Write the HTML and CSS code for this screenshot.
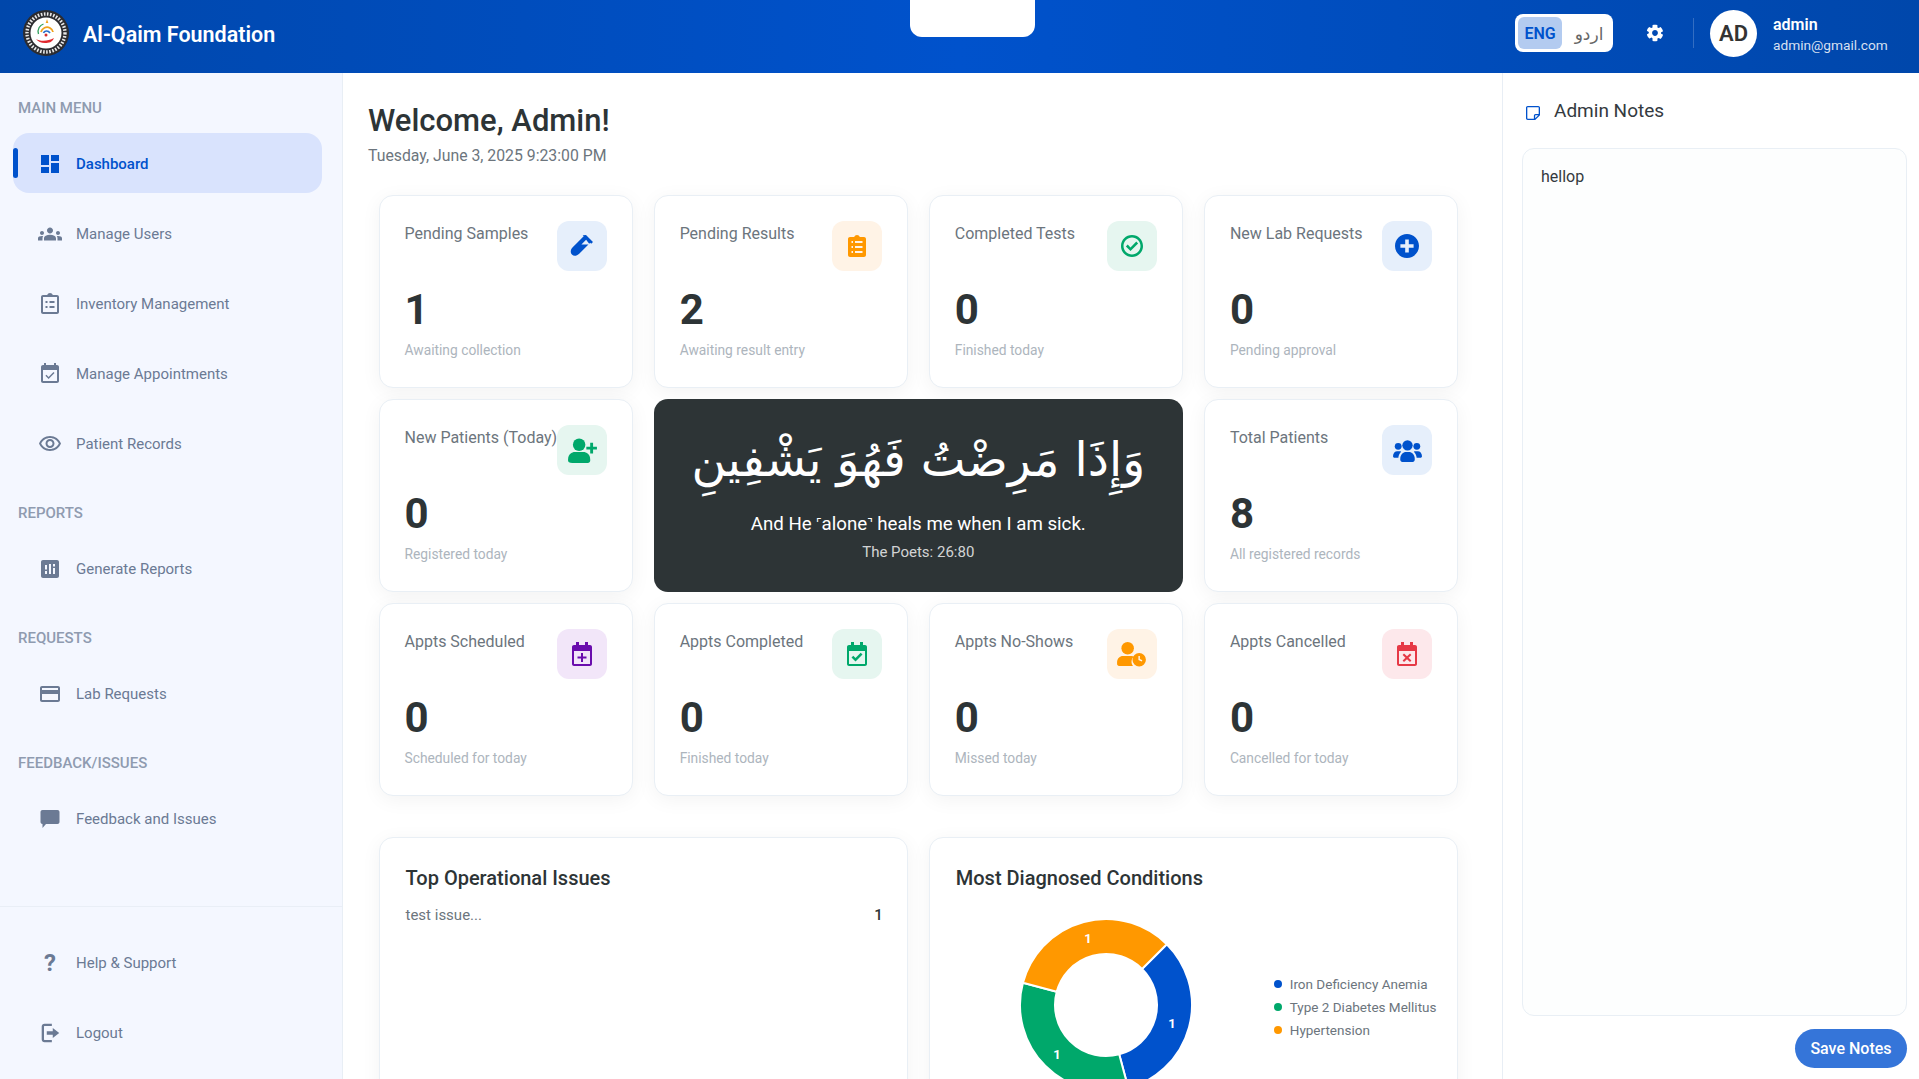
FILE: index.html
```html
<!DOCTYPE html>
<html lang="en">
<head>
    <meta charset="UTF-8">
    <meta name="viewport" content="width=device-width, initial-scale=1.0">
    <title>Al-Qaim Foundation</title>
    <link rel="stylesheet" href="styles.css">
</head>
<body>
    <svg class="sprite" xmlns="http://www.w3.org/2000/svg">
        <symbol id="i-dashboard" viewBox="0 0 24 24"><path d="M3 13h8V3H3v10zm0 8h8v-6H3v6zm10 0h8V11h-8v10zm0-18v6h8V3h-8z"/></symbol>
        <symbol id="i-groups" viewBox="0 0 24 24"><path d="M12 12.750c1.630 0 3.070.39 4.240.9 1.080.48 1.760 1.560 1.760 2.730V18.500H6v-2.110c0-1.180.68-2.260 1.760-2.730 1.170-.52 2.610-.91 4.240-.91zM4 13c1.100 0 2-.9 2-2s-.9-2-2-2-2 .9-2 2 .9 2 2 2zm1.130 1.100c-.37-.06-.74-.1-1.130-.1-.99 0-1.930.21-2.780.58C.48 14.900 0 15.620 0 16.430v2.070h4.500v-2.110c0-.83.23-1.610.63-2.290zM20 13c1.100 0 2-.9 2-2s-.9-2-2-2-2 .9-2 2 .9 2 2 2zm4 3.430c0-.81-.48-1.530-1.220-1.850-.85-.37-1.790-.58-2.780-.58-.39 0-.76.04-1.130.1.4.68.63 1.460.63 2.290v2.110H24v-2.070zM12 5.500c1.660 0 3 1.340 3 3s-1.340 3-3 3-3-1.340-3-3 1.340-3 3-3z"/></symbol>
        <symbol id="i-inventory" viewBox="0 0 24 24"><path d="M19 3h-4.200C14.400 1.800 13.300 1 12 1s-2.400.8-2.800 2H5c-1.100 0-2 .9-2 2v15c0 1.100.9 2 2 2h14c1.100 0 2-.9 2-2V5c0-1.100-.9-2-2-2zm0 17H5V5h14v15z"/><path d="M7.500 9h2v2h-2zM11.500 9h5v2h-5zM7.500 14h2v2h-2zM11.500 14h5v2h-5z"/></symbol>
        <symbol id="i-event" viewBox="0 0 24 24"><path d="M16.530 11.060L15.470 10l-4.880 4.880-2.120-2.120-1.060 1.060L10.590 17l5.940-5.940zM19 3h-1V1h-2v2H8V1H6v2H5c-1.110 0-1.990.9-1.990 2L3 19c0 1.100.89 2 2 2h14c1.100 0 2-.9 2-2V5c0-1.100-.9-2-2-2zm0 16H5V8h14v11z"/></symbol>
        <symbol id="i-eye" viewBox="0 0 24 24"><path d="M12 6c3.790 0 7.170 2.130 8.820 5.500C19.170 14.870 15.790 17 12 17s-7.170-2.130-8.820-5.500C4.830 8.130 8.210 6 12 6m0-2C7 4 2.730 7.110 1 11.500 2.730 15.890 7 19 12 19s9.270-3.110 11-7.500C21.270 7.110 17 4 12 4zm0 5c1.380 0 2.500 1.120 2.500 2.500S13.380 14 12 14s-2.500-1.120-2.500-2.500S10.620 9 12 9m0-2c-2.480 0-4.500 2.020-4.500 4.500S9.520 16 12 16s4.500-2.020 4.500-4.500S14.480 7 12 7z"/></symbol>
        <symbol id="i-report" viewBox="0 0 24 24"><path d="M19 3H5c-1.100 0-2 .9-2 2v14c0 1.100.9 2 2 2h14c1.100 0 2-.9 2-2V5c0-1.100-.9-2-2-2zM9 17H7v-3h2v3zm0-4.500H7V8h2v4.500zM13 17h-2V7h2v10zm4 0h-2v-6h2v6zm0-7.500h-2V7h2v2.500z"/></symbol>
        <symbol id="i-card" viewBox="0 0 24 24"><path d="M20 4H4c-1.110 0-1.990.89-1.990 2L2 18c0 1.110.89 2 2 2h16c1.110 0 2-.89 2-2V6c0-1.110-.89-2-2-2zm0 14H4v-6h16v6zm0-10H4V6h16v2z"/></symbol>
        <symbol id="i-chat" viewBox="0 0 24 24"><path d="M4.500 3h15c1.100 0 2 .9 2 2v10c0 1.100-.9 2-2 2H8l-3.500 4v-4c-1.100 0-2-.9-2-2V5c0-1.100.9-2 2-2z"/></symbol>
        <symbol id="i-logout" viewBox="-1 -1 26 26"><path d="M3 5c0-1.700 1.300-3 3-3h8v2.500H6c-.3 0-.5.2-.5.5v14c0 .3.2.5.5.5h8V22H6c-1.700 0-3-1.300-3-3V5z"/><path d="M15 6.500l7 5.500-7 5.500V14H8.500v-4H15V6.500z"/></symbol>
        <symbol id="i-gear" viewBox="0 0 24 24"><path d="M21.300 13.900l-2-1.100c.1-.5.100-1.100 0-1.600l2-1.100c.2-.1.300-.4.300-.6-.5-1.700-1.400-3.200-2.600-4.400-.2-.2-.4-.2-.7-.1l-2 1.100c-.4-.3-.9-.6-1.400-.8V3c0-.3-.2-.5-.4-.5-1.700-.4-3.500-.4-5.100 0-.3 0-.4.300-.4.500v2.300c-.5.200-1 .5-1.400.8l-2-1.100c-.2-.1-.5-.1-.7.1C3.700 5.800 2.800 7.300 2.300 9c-.1.300 0 .5.300.6l2 1.100c-.1.500-.1 1.100 0 1.600l-2 1.100c-.2.100-.3.400-.3.600.5 1.700 1.400 3.200 2.600 4.400.2.200.4.200.7.1l2-1.100c.4.300.9.600 1.400.8V21c0 .3.2.5.4.5 1.700.4 3.500.4 5.100 0 .3 0 .4-.3.4-.5v-2.300c.5-.2 1-.5 1.400-.8l2 1.100c.2.100.5.100.7-.1 1.200-1.200 2.100-2.700 2.600-4.400.1-.3 0-.5-.3-.6zM12 15.500c-1.900 0-3.500-1.600-3.500-3.500s1.600-3.500 3.500-3.500 3.500 1.600 3.500 3.500-1.600 3.500-3.500 3.500z"/></symbol>
        <symbol id="i-note" viewBox="0 0 16 16"><path d="M2 0h12c1.100 0 2 .9 2 2v8.500L10.500 16H2c-1.100 0-2-.9-2-2V2C0 .9.900 0 2 0zm0 1.500c-.3 0-.5.200-.5.500v12c0 .3.200.5.500.5h7V11c0-1.100.9-2 2-2h3.500V2c0-.3-.2-.5-.5-.5H2zM10.500 14l3.500-3.500h-3c-.3 0-.5.2-.5.5v3z"/></symbol>
        <symbol id="i-tube" viewBox="0 0 24 24"><path d="M16 1l7 7-1.800 1.800-1-1-11 11c-2.300 2.300-5.500 2.600-7.300.8-1.800-1.800-1.500-5 .8-7.300l11-11-1-1L16 1zm.1 4.700l-4.700 4.700h7.100l.7-.7-3.100-4z"/></symbol>
        <symbol id="i-clipboard" viewBox="0 0 24 24"><path d="M19 3h-4.200C14.400 1.800 13.300 1 12 1s-2.400.8-2.800 2H5c-1.100 0-2 .9-2 2v16c0 1.100.9 2 2 2h14c1.100 0 2-.9 2-2V5c0-1.100-.9-2-2-2zM8 19H6.500v-2H8v2zm0-5H6.500v-2H8v2zm0-5H6.500V7H8v2zm9.500 10H10v-2h7.500v2zm0-5H10v-2h7.500v2zm0-5H10V7h7.500v2z"/></symbol>
        <symbol id="i-check" viewBox="0 0 24 24"><path d="M12 1C5.900 1 1 5.900 1 12s4.900 11 11 11 11-4.900 11-11S18.100 1 12 1zm0 19.500c-4.700 0-8.500-3.800-8.500-8.500S7.300 3.500 12 3.500s8.500 3.800 8.500 8.500-3.800 8.500-8.500 8.500z"/><path d="M10.500 17l-4.600-4.600 1.800-1.800 2.800 2.800 5.800-5.800 1.800 1.800z"/></symbol>
        <symbol id="i-plus" viewBox="2 2 20 20"><path d="M12 2C6.480 2 2 6.480 2 12s4.480 10 10 10 10-4.480 10-10S17.520 2 12 2zm5.500 11.500h-4v4h-3v-4h-4v-3h4v-4h3v4h4v3z"/></symbol>
        <symbol id="i-person-add" viewBox="0 0 30 26"><circle cx="11.500" cy="7" r="6.500"/><path d="M0 22c0-5 4-7.500 7-7.500h9c3 0 7 2.500 7 7.500v1.500c0 1.400-1.100 2.500-2.500 2.500h-16C1.100 26 0 24.900 0 23.500V22z"/><path d="M23 5h3v4h4v3h-4v4h-3v-4h-4V9h4V5z"/></symbol>
        <symbol id="i-users" viewBox="0 0 28 22"><circle cx="14" cy="6" r="5"/><circle cx="5" cy="7" r="3.300"/><circle cx="23" cy="7" r="3.300"/><path d="M7 19c0-4 3-6.500 5.500-6.500h3C18 12.500 21 15 21 19v1c0 1.100-.9 2-2 2H9c-1.100 0-2-.9-2-2v-1z"/><path d="M0 16.500c0-3 2-4.800 4-4.800h2.500c.5 0 1 .1 1.400.4C6.300 13.500 5.300 15.700 5.200 18H1.500C.7 18 0 17.300 0 16.500zM28 16.500c0-3-2-4.800-4-4.800h-2.500c-.5 0-1 .1-1.400.4 1.600 1.400 2.600 3.600 2.700 5.900h3.700c.8 0 1.500-.7 1.500-1.500z"/></symbol>
        <symbol id="i-cal-plus" viewBox="0 0 20 24"><path d="M2 3h2V0h3v3h6V0h3v3h2c1.100 0 2 .9 2 2v17c0 1.100-.9 2-2 2H2c-1.100 0-2-.9-2-2V5c0-1.100.9-2 2-2zm0 6v13h16V9H2z"/><path d="M9 11h2v3.500h3.500v2H11V20H9v-3.500H5.500v-2H9V11z"/></symbol>
        <symbol id="i-cal-check" viewBox="0 0 20 24"><path d="M2 3h2V0h3v3h6V0h3v3h2c1.100 0 2 .9 2 2v17c0 1.100-.9 2-2 2H2c-1.100 0-2-.9-2-2V5c0-1.100.9-2 2-2zm0 6v13h16V9H2z"/><path d="M8.500 19.500l-4-4 1.800-1.700 2.200 2.200 5.200-5.200 1.800 1.700z"/></symbol>
        <symbol id="i-cal-x" viewBox="0 0 20 24"><path d="M2 3h2V0h3v3h6V0h3v3h2c1.100 0 2 .9 2 2v17c0 1.100-.9 2-2 2H2c-1.100 0-2-.9-2-2V5c0-1.100.9-2 2-2zm0 6v13h16V9H2z"/><path d="M7 11.500l3 2.700 3-2.700 1.400 1.500-2.900 2.700 2.900 2.800-1.400 1.500-3-2.800-3 2.800-1.400-1.500 2.900-2.800L5.600 13z"/></symbol>
        <symbol id="i-person-clock" viewBox="0 0 30 26"><circle cx="11" cy="6.500" r="6.500"/><path d="M0 21c0-4 3-6.500 6-6.500h9c1 0 1.800.2 2.600.6-1.600 1.300-2.600 3.300-2.600 5.400 0 1.700.6 3.300 1.700 4.500H2c-1.100 0-2-.9-2-2V21z"/><path fill-rule="evenodd" d="M23 14.500a7 7 0 1 1 0 14 7 7 0 0 1 0-14zm-.8 3v4.200l3.400 1.700.7-1.300-2.600-1.300v-3.300h-1.500z" transform="translate(0 -3)"/></symbol>
    </svg>

    <header class="topbar">
        <div class="brand">
            <svg class="brand-logo" viewBox="0 0 46 46">
                <circle cx="23" cy="23" r="23" fill="#2c2c30"/>
                <circle cx="23" cy="23" r="19" fill="none" stroke="#e8e8e8" stroke-width="3.400" stroke-dasharray="1.600 1.500"/>
                <circle cx="23" cy="23" r="15.500" fill="#fff"/>
                <path d="M15.500 24c-1.500-5 1.500-9 5-10" fill="none" stroke="#2e9e5b" stroke-width="1.300"/>
                <path d="M18 22c1-4 5.500-6 9-4 1.800 1 2.800 2.500 3 4" fill="none" stroke="#f0a21c" stroke-width="1.800"/>
                <path d="M20.500 23c.8-2.300 4.500-3 6.500 0" fill="none" stroke="#2a6fc9" stroke-width="1.700"/>
                <path d="M24 9l1.300 4h-2.600z" fill="#f0a21c"/>
                <circle cx="23" cy="25" r="1.500" fill="#d62b2b"/>
                <path d="M13 29c4 2.500 12 2.500 18-1-2 4.500-5 5-9 5-4 0-7-1.500-9-4z" fill="#e0282e"/>
            </svg>
            <span class="brand-name">Al-Qaim Foundation</span>
        </div>
        <div class="top-tab"></div>
        <div class="top-actions">
            <div class="lang-toggle">
                <span class="lang-btn lang-btn-active">ENG</span>
                <span class="lang-btn lang-btn-ur" lang="ur">اردو</span>
            </div>
            <svg class="gear"><use href="#i-gear"/></svg>
            <span class="top-divider"></span>
            <span class="avatar">AD</span>
            <div class="user-info">
                <div class="user-name">admin</div>
                <div class="user-mail">admin@gmail.com</div>
            </div>
        </div>
    </header>

    <div class="layout">
        <aside class="sidebar">
            <div class="menu-section">
                <div class="menu-label">Main Menu</div>
                <a class="menu-item menu-item-active"><svg class="menu-icon"><use href="#i-dashboard"/></svg>Dashboard</a>
                <a class="menu-item"><svg class="menu-icon"><use href="#i-groups"/></svg>Manage Users</a>
                <a class="menu-item"><svg class="menu-icon"><use href="#i-inventory"/></svg>Inventory Management</a>
                <a class="menu-item"><svg class="menu-icon"><use href="#i-event"/></svg>Manage Appointments</a>
                <a class="menu-item"><svg class="menu-icon"><use href="#i-eye"/></svg>Patient Records</a>
            </div>
            <div class="menu-section">
                <div class="menu-label">Reports</div>
                <a class="menu-item"><svg class="menu-icon"><use href="#i-report"/></svg>Generate Reports</a>
            </div>
            <div class="menu-section">
                <div class="menu-label">Requests</div>
                <a class="menu-item"><svg class="menu-icon"><use href="#i-card"/></svg>Lab Requests</a>
            </div>
            <div class="menu-section">
                <div class="menu-label">Feedback/Issues</div>
                <a class="menu-item"><svg class="menu-icon"><use href="#i-chat"/></svg>Feedback and Issues</a>
            </div>
            <div class="sidebar-footer">
                <a class="menu-item"><span class="menu-icon help-icon">?</span>Help &amp; Support</a>
                <a class="menu-item"><svg class="menu-icon"><use href="#i-logout"/></svg>Logout</a>
            </div>
        </aside>

        <main class="content">
            <h1 class="welcome">Welcome, Admin!</h1>
            <p class="date">Tuesday, June 3, 2025 9:23:00 PM</p>

            <section class="stats">
                <div class="card stat">
                    <div class="stat-top"><span class="stat-title">Pending Samples</span><span class="stat-icon blue"><svg><use href="#i-tube"/></svg></span></div>
                    <div class="stat-num">1</div>
                    <div class="stat-sub">Awaiting collection</div>
                </div>
                <div class="card stat">
                    <div class="stat-top"><span class="stat-title">Pending Results</span><span class="stat-icon orange"><svg><use href="#i-clipboard"/></svg></span></div>
                    <div class="stat-num">2</div>
                    <div class="stat-sub">Awaiting result entry</div>
                </div>
                <div class="card stat">
                    <div class="stat-top"><span class="stat-title">Completed Tests</span><span class="stat-icon green"><svg><use href="#i-check"/></svg></span></div>
                    <div class="stat-num">0</div>
                    <div class="stat-sub">Finished today</div>
                </div>
                <div class="card stat">
                    <div class="stat-top"><span class="stat-title">New Lab Requests</span><span class="stat-icon blue"><svg><use href="#i-plus"/></svg></span></div>
                    <div class="stat-num">0</div>
                    <div class="stat-sub">Pending approval</div>
                </div>

                <div class="card stat">
                    <div class="stat-top"><span class="stat-title">New Patients (Today)</span><span class="stat-icon green icon-wide"><svg><use href="#i-person-add"/></svg></span></div>
                    <div class="stat-num">0</div>
                    <div class="stat-sub">Registered today</div>
                </div>
                <div class="quote">
                    <div class="quote-ar" lang="ar" dir="rtl">وَإِذَا مَرِضْتُ فَهُوَ يَشْفِينِ</div>
                    <div class="quote-en">And He ˹alone˺ heals me when I am sick.</div>
                    <div class="quote-ref">The Poets: 26:80</div>
                </div>
                <div class="card stat">
                    <div class="stat-top"><span class="stat-title">Total Patients</span><span class="stat-icon blue icon-wide"><svg><use href="#i-users"/></svg></span></div>
                    <div class="stat-num">8</div>
                    <div class="stat-sub">All registered records</div>
                </div>

                <div class="card stat">
                    <div class="stat-top"><span class="stat-title">Appts Scheduled</span><span class="stat-icon purple"><svg><use href="#i-cal-plus"/></svg></span></div>
                    <div class="stat-num">0</div>
                    <div class="stat-sub">Scheduled for today</div>
                </div>
                <div class="card stat">
                    <div class="stat-top"><span class="stat-title">Appts Completed</span><span class="stat-icon green"><svg><use href="#i-cal-check"/></svg></span></div>
                    <div class="stat-num">0</div>
                    <div class="stat-sub">Finished today</div>
                </div>
                <div class="card stat">
                    <div class="stat-top"><span class="stat-title">Appts No-Shows</span><span class="stat-icon orange icon-wide"><svg><use href="#i-person-clock"/></svg></span></div>
                    <div class="stat-num">0</div>
                    <div class="stat-sub">Missed today</div>
                </div>
                <div class="card stat">
                    <div class="stat-top"><span class="stat-title">Appts Cancelled</span><span class="stat-icon red"><svg><use href="#i-cal-x"/></svg></span></div>
                    <div class="stat-num">0</div>
                    <div class="stat-sub">Cancelled for today</div>
                </div>
            </section>

            <section class="charts">
                <div class="card chart-card">
                    <h3 class="chart-title">Top Operational Issues</h3>
                    <div class="issue-row"><span>test issue...</span><b>1</b></div>
                </div>
                <div class="card chart-card">
                    <h3 class="chart-title">Most Diagnosed Conditions</h3>
                    <div class="chart-body">
                        <svg class="donut" viewBox="-90 -90 180 180">
                            <path class="seg-blue" d="M60.800 -60.800A86 86 0 0 1 22.260 83.070L13.200 49.260A51 51 0 0 0 36.060 -36.060Z"/>
                            <path class="seg-green" d="M22.260 83.070A86 86 0 0 1 -83.070 -22.260L-49.260 -13.200A51 51 0 0 0 13.200 49.260Z"/>
                            <path class="seg-orange" d="M-83.070 -22.260A86 86 0 0 1 60.800 -60.800L36.060 -36.060A51 51 0 0 0 -49.260 -13.200Z"/>
                            <text x="66" y="23">1</text>
                            <text x="-49" y="54">1</text>
                            <text x="-18" y="-62">1</text>
                        </svg>
                        <ul class="legend">
                            <li><i class="dot dot-blue"></i>Iron Deficiency Anemia</li>
                            <li><i class="dot dot-green"></i>Type 2 Diabetes Mellitus</li>
                            <li><i class="dot dot-orange"></i>Hypertension</li>
                        </ul>
                    </div>
                </div>
            </section>
        </main>

        <aside class="notes">
            <div class="notes-title"><svg class="notes-icon"><use href="#i-note"/></svg>Admin Notes</div>
            <textarea class="notes-box">hellop</textarea>
            <button class="save-btn">Save Notes</button>
        </aside>
    </div>
</body>
</html>
```

FILE: styles.css
```css
* {
    box-sizing: border-box;
}
body {
    margin: 0;
    height: 100vh;
    overflow: hidden;
    display: flex;
    flex-direction: column;
    font-family: Roboto, "Noto Sans", sans-serif;
    background-color: #fff;
    color: #2d3436;
}
.sprite {
    display: none;
}

/* top bar */
.topbar {
    position: relative;
    flex: none;
    height: 73px;
    display: flex;
    align-items: center;
    justify-content: space-between;
    padding: 0 33px 7px 23px;
    background: linear-gradient(90deg, #0047ab, #0052cc 50%, #0047ab);
    color: #fff;
}
.brand {
    display: flex;
    align-items: center;
    gap: 14px;
}
.brand-logo {
    width: 46px;
    height: 46px;
}
.brand-name {
    padding-top: 3px;
    font-size: 21.500px;
    font-weight: 600;
}
.top-tab {
    position: absolute;
    top: 0;
    left: 910px;
    width: 125px;
    height: 37px;
    background-color: #fff;
    border-radius: 0 0 12px 12px;
}
.top-actions {
    display: flex;
    align-items: center;
}
.lang-toggle {
    width: 98px;
    height: 38px;
    padding: 3px;
    display: flex;
    background-color: #fff;
    border-radius: 8px;
}
.lang-btn {
    flex: 1;
    display: flex;
    align-items: center;
    justify-content: center;
    padding-top: 1px;
    font-size: 16px;
    color: #666;
    border-radius: 6px;
}
.lang-btn-active {
    flex: none;
    width: 44px;
    background-color: #b3cbf0;
    color: #0052cc;
    font-weight: 600;
}
.lang-btn-ur {
    padding-left: 6px;
    font-family: "DejaVu Sans", sans-serif;
    font-size: 17px;
}
.gear {
    width: 20px;
    height: 20px;
    margin-left: 32px;
    fill: #fff;
}
.top-divider {
    width: 1px;
    height: 30px;
    margin: 0 16px 0 28px;
    background-color: rgba(255, 255, 255, 0.2);
}
.avatar {
    width: 47px;
    height: 47px;
    padding-top: 1px;
    display: flex;
    align-items: center;
    justify-content: center;
    border-radius: 50%;
    background-color: #fff;
    color: #333;
    font-size: 22px;
    font-weight: 600;
}
.user-info {
    width: 113px;
    margin-left: 16px;
    padding-top: 3px;
    white-space: nowrap;
}
.user-name {
    font-size: 16px;
    font-weight: 600;
    line-height: 20px;
}
.user-mail {
    font-size: 13.700px;
    line-height: 20px;
    color: rgba(255, 255, 255, 0.85);
}

.layout {
    flex: 1;
    min-height: 0;
    display: flex;
}

/* sidebar */
.sidebar {
    flex: none;
    width: 343px;
    padding-top: 5px;
    display: flex;
    flex-direction: column;
    background-color: #f4f7ff;
    border-right: 1px solid #e8eef5;
}
.menu-section {
    margin-top: 20px;
}
.menu-label {
    height: 20px;
    margin: 0 0 15px 18px;
    font-size: 15px;
    line-height: 21px;
    font-weight: 500;
    text-transform: uppercase;
    color: #8f9bb0;
}
.menu-item {
    height: 60px;
    margin: 0 20px 10px 13px;
    padding: 1px 0 0 25px;
    display: flex;
    align-items: center;
    position: relative;
    font-size: 15px;
    color: #6b7a94;
    border-radius: 16px;
}
.menu-item-active {
    background-color: #d9e3fd;
    color: #0052cc;
    font-weight: 500;
}
.menu-item-active::before {
    content: "";
    position: absolute;
    left: 0;
    top: 15px;
    width: 5px;
    height: 30px;
    background-color: #0052cc;
    border-radius: 3px;
}
.menu-icon {
    flex: none;
    width: 24px;
    height: 24px;
    margin-right: 14px;
    fill: currentColor;
}
.help-icon {
    font-size: 24px;
    font-weight: 700;
    line-height: 24px;
    text-align: center;
}
.sidebar-footer {
    margin-top: auto;
    padding: 25px 0 7px;
    border-top: 1px solid #e9eef6;
}

/* main column */
.content {
    flex: 1;
    min-width: 0;
    overflow: hidden;
    padding: 26px 33px 0 25px;
}
.welcome {
    margin: 0;
    font-size: 31px;
    line-height: 44px;
    font-weight: 500;
}
.date {
    margin: 3px 0 0;
    font-size: 15.800px;
    line-height: 20px;
    color: #6c757d;
}
.stats {
    margin: 29px 11px 0 10.500px;
    display: grid;
    grid-template-columns: repeat(4, minmax(0, 1fr));
    grid-auto-rows: 192.500px;
    gap: 11.500px 21px;
}
.card {
    background-color: #fff;
    border: 1px solid #e9eff5;
    border-radius: 14px;
    box-shadow: 0 4px 20px rgba(0, 0, 0, 0.05);
}
.stat {
    padding: 25px 25px 0;
}
.stat-top {
    display: flex;
    justify-content: space-between;
    align-items: flex-start;
}
.stat-title {
    margin-top: 2px;
    font-size: 16px;
    line-height: 22px;
    color: #6c757d;
    white-space: nowrap;
}
.stat-icon {
    flex: none;
    width: 50px;
    height: 50px;
    display: flex;
    align-items: center;
    justify-content: center;
    border-radius: 12px;
}
.stat-icon svg {
    width: 24px;
    height: 24px;
    fill: currentColor;
}
.stat-icon.icon-wide svg {
    width: 29px;
    height: 25px;
}
.blue { background-color: #e6effb; color: #0052cc; }
.orange { background-color: #fff3e6; color: #ff9800; }
.green { background-color: #e6f6f0; color: #00a86b; }
.purple { background-color: #f2e6f9; color: #6a0dad; }
.red { background-color: #fde8eb; color: #e63946; }
.stat-num {
    margin-top: 15px;
    font-size: 42px;
    line-height: 48px;
    font-weight: 700;
}
.stat-sub {
    margin-top: 6px;
    font-size: 13.800px;
    line-height: 20px;
    color: #adb5bd;
}
.quote {
    grid-column: span 2;
    display: flex;
    flex-direction: column;
    align-items: center;
    background-color: #2d3436;
    color: #fff;
    border-radius: 14px;
}
.quote-ar {
    margin-top: 21px;
    font-family: "DejaVu Sans", sans-serif;
    font-size: 47.500px;
    line-height: 80px;
}
.quote-en {
    margin-top: 11px;
    font-size: 18.700px;
    line-height: 26px;
}
.quote-ref {
    margin-top: 5px;
    font-size: 15px;
    line-height: 20px;
    color: rgba(255, 255, 255, 0.8);
}
.charts {
    margin: 41px 11px 0 10.500px;
    display: grid;
    grid-template-columns: repeat(2, minmax(0, 1fr));
    gap: 21px;
}
.chart-card {
    height: 400px;
    padding: 26px;
}
.chart-title {
    margin: 0;
    font-size: 20px;
    line-height: 28px;
    font-weight: 500;
}
.issue-row {
    margin: 13px -2px 0 0;
    display: flex;
    justify-content: space-between;
    font-size: 15px;
    line-height: 20px;
    color: #6c757d;
}
.issue-row b {
    color: #2d3436;
    font-weight: 500;
}
.chart-body {
    margin-top: 23px;
    display: flex;
    align-items: flex-start;
}
.donut {
    flex: none;
    width: 180px;
    height: 180px;
    margin-left: 60px;
}
.donut path {
    stroke: #fff;
    stroke-width: 2;
}
.donut text {
    fill: #fff;
    font-size: 13px;
    font-weight: 700;
    text-anchor: middle;
}
.seg-blue { fill: #0052cc; }
.seg-green { fill: #00a86b; }
.seg-orange { fill: #ff9800; }
.legend {
    margin: 58px 0 0 78px;
    padding: 0;
    list-style: none;
    font-size: 13.500px;
    line-height: 23px;
    color: #6c757d;
    white-space: nowrap;
}
.legend li {
    display: flex;
    align-items: center;
}
.dot {
    width: 8px;
    height: 8px;
    margin-right: 8px;
    border-radius: 50%;
}
.dot-blue { background-color: #0052cc; }
.dot-green { background-color: #00a86b; }
.dot-orange { background-color: #ff9800; }

/* notes panel */
.notes {
    flex: none;
    width: 417px;
    padding: 25px 12px 11px 19px;
    display: flex;
    flex-direction: column;
    border-left: 1px solid #e8eef5;
}
.notes-title {
    display: flex;
    align-items: center;
    margin-bottom: 24px;
    font-size: 19px;
    line-height: 26px;
    color: #343a40;
}
.notes-icon {
    width: 14px;
    height: 14px;
    margin: 4px 14px 0 4px;
    fill: #0052cc;
}
.notes-box {
    flex: 1;
    padding: 16px 18px;
    resize: none;
    font-family: inherit;
    font-size: 16px;
    line-height: 24px;
    color: #343a40;
    background-color: #fdfefe;
    border: 1px solid #e9eff5;
    border-radius: 12px;
    outline: none;
}
.save-btn {
    align-self: flex-end;
    width: 112px;
    height: 39px;
    margin-top: 13px;
    font-family: inherit;
    font-size: 16px;
    font-weight: 500;
    color: #fff;
    background-color: #3575d9;
    border: none;
    border-radius: 20px;
    cursor: pointer;
}
```
